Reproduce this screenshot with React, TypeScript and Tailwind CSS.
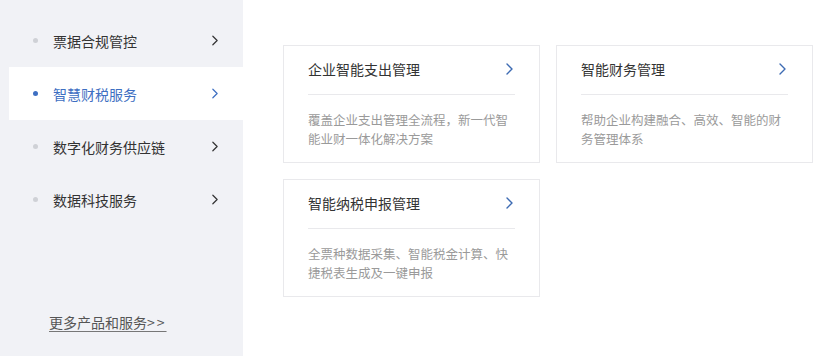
import React from "react";

const font = { fontFamily: '"Noto Sans CJK SC", "Noto Sans", sans-serif' };

function Chevron({ color, w = 7, h = 12 }: { color: string; w?: number; h?: number }) {
  return (
    <svg width={w} height={h} viewBox="0 0 7 12" fill="none">
      <path d="M1 1 L6 6 L1 11" stroke={color} strokeWidth="1.4" strokeLinecap="round" strokeLinejoin="round" />
    </svg>
  );
}

const navItems = ["票据合规管控", "智慧财税服务", "数字化财务供应链", "数据科技服务"];

const cards = [
  { title: "企业智能支出管理", desc: "覆盖企业支出管理全流程，新一代智能业财一体化解决方案" },
  { title: "智能财务管理", desc: "帮助企业构建融合、高效、智能的财务管理体系" },
  { title: "智能纳税申报管理", desc: "全票种数据采集、智能税金计算、快捷税表生成及一键申报" },
];

export default function App() {
  return (
    <div className="flex w-[828px] h-[356px] bg-white overflow-hidden" style={font}>
      <div className="w-[243px] h-full bg-[#f1f2f6] flex flex-col pt-[14px]">
        {navItems.map((t, i) => {
          const active = i === 1;
          return (
            <div
              key={t}
              className={`ml-[9px] h-[53px] flex items-center pl-[24px] pr-[25px] ${active ? "bg-white" : ""}`}
            >
              <span className={`w-[5px] h-[5px] rounded-full ${active ? "bg-[#3e6fc2]" : "bg-[#cfd1d6]"}`} />
              <span className={`ml-[15px] flex-1 text-[14px] leading-[20px] ${active ? "text-[#3e6fc2]" : "text-[#333333]"}`}>
                {t}
              </span>
              <Chevron color={active ? "#3e6fc2" : "#333333"} w={6} h={11} />
            </div>
          );
        })}
        <div className="mt-auto mb-[23px] ml-[49px]">
          <span className="text-[14px] leading-[20px] text-[#555555] underline underline-offset-[3px] decoration-[#777777]">
            更多产品和服务<span className="tracking-[2px]">&gt;&gt;</span>
          </span>
        </div>
      </div>
      <div className="flex-1 pl-[40px] pt-[45px]">
        <div className="grid grid-cols-[257px_257px] gap-x-[16px] gap-y-[16px]">
          {cards.map((c) => (
            <div key={c.title} className="border border-[#e9e9ec] bg-white">
              <div className="mx-[24px] pt-[10px] pb-[12px] flex items-center justify-between border-b border-[#e9e9ec]">
                <span className="text-[14px] leading-[26px] text-[#333333]">{c.title}</span>
                <span className="mr-[2px]">
                  <Chevron color="#3d6bb3" w={7} h={12} />
                </span>
              </div>
              <div className="mx-[24px] mt-[15px] pb-[14px] text-[12.5px] leading-[19px] text-[#9a9a9a]">
                {c.desc}
              </div>
            </div>
          ))}
        </div>
      </div>
    </div>
  );
}
